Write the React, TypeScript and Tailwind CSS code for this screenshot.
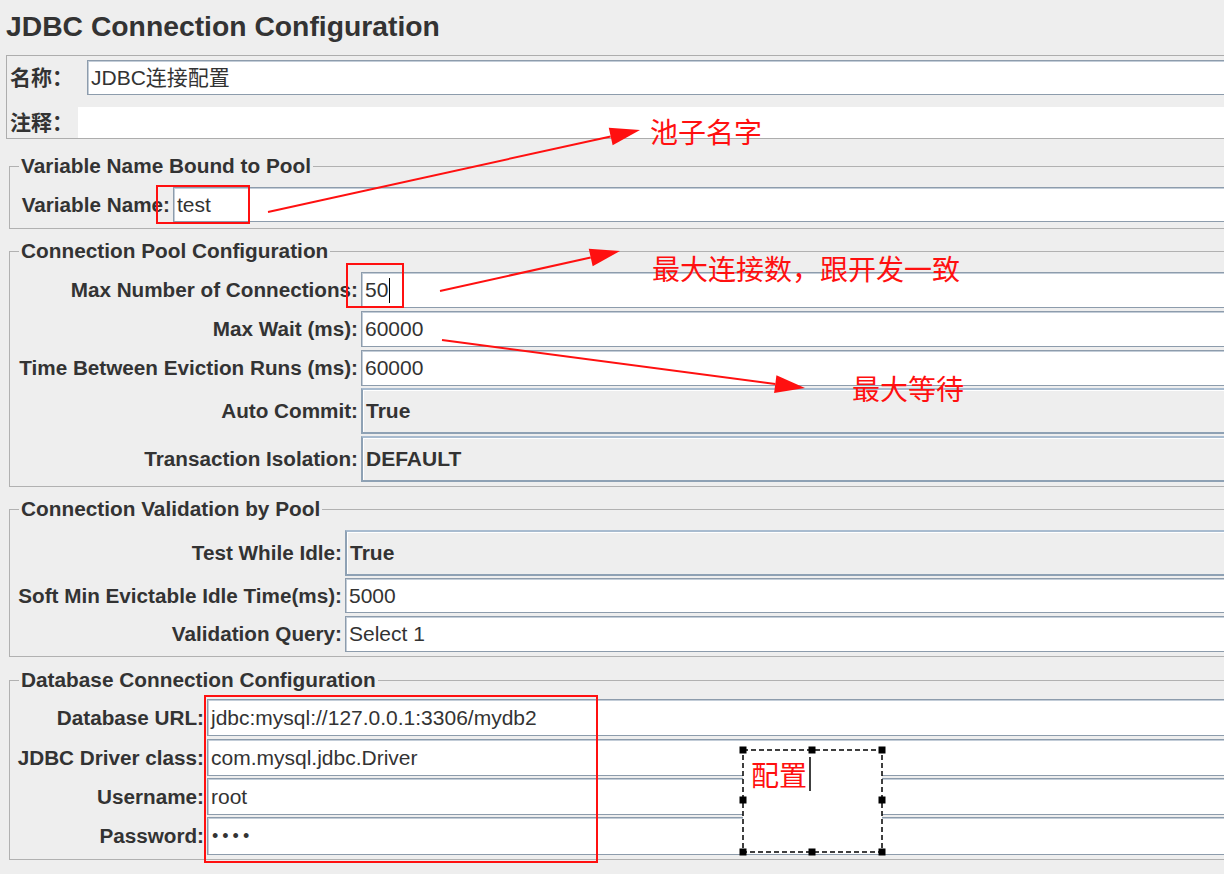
import React from 'react';

const FONT = "font-['Liberation_Sans','Noto_Sans_CJK_SC',sans-serif]";
const CJK = "font-['Noto_Sans_CJK_SC',sans-serif]";

function Field({ value, className = '' }: { value?: React.ReactNode; className?: string }) {
  return (
    <div
      className={`flex min-w-0 flex-1 items-center border border-r-0 border-[#8d9cac] bg-white pl-[3px] text-[21px] text-[#333] shadow-[inset_1px_1px_0_#c3cdd8] ${className}`}
    >
      {value}
    </div>
  );
}

function Combo({ value }: { value: string }) {
  return (
    <div className="flex min-w-0 flex-1 items-center border-2 border-r-0 border-[#8ea1b4] border-t-[#a8bbcf] bg-[#eeeeee] pl-[3px] text-[21px] font-bold text-[#333] shadow-[inset_1px_1px_0_#fff]">
      {value}
    </div>
  );
}

function Label({ text, className }: { text: string; className: string }) {
  return (
    <div className={`flex shrink-0 items-center justify-end pr-[3px] text-[20.7px] font-bold text-[#333] ${className}`}>
      {text}
    </div>
  );
}

function Panel({ title, className, children }: { title: string; className: string; children: React.ReactNode }) {
  return (
    <fieldset className={`ml-[9px] border border-r-0 border-[#b1b1b1] ${className}`}>
      <legend className="ml-[9px] px-[2px] text-[20.8px] font-bold leading-[24px] text-[#333]">{title}</legend>
      {children}
    </fieldset>
  );
}

function arrowHead(x1: number, y1: number, x2: number, y2: number, len = 30, half = 9) {
  const dx = x2 - x1;
  const dy = y2 - y1;
  const l = Math.hypot(dx, dy);
  const ux = dx / l;
  const uy = dy / l;
  const bx = x2 - ux * len;
  const by = y2 - uy * len;
  return {
    bx,
    by,
    points: `${x2},${y2} ${bx - uy * half},${by + ux * half} ${bx + uy * half},${by - ux * half}`,
  };
}

function Arrow({ x1, y1, x2, y2 }: { x1: number; y1: number; x2: number; y2: number }) {
  const h = arrowHead(x1, y1, x2, y2);
  return (
    <g>
      <line x1={x1} y1={y1} x2={h.bx} y2={h.by} stroke="#ff1010" strokeWidth={2} />
      <polygon points={h.points} fill="#ff1010" />
    </g>
  );
}

const handles = [
  [743, 750], [812, 750], [882, 750],
  [743, 800], [882, 800],
  [743, 852], [812, 852], [882, 852],
];

export default function App() {
  return (
    <div className={`relative h-[874px] w-[1224px] overflow-hidden bg-[#eeeeee] ${FONT}`}>
      <div className="pl-[6px] pt-[8px] text-[28.3px] font-bold leading-[36px] text-[#333]">
        JDBC Connection Configuration
      </div>

      {/* name / comment */}
      <div className="ml-[6px] mt-[11px] border border-r-0 border-[#adadad] pt-[4px]">
        <div className="flex h-[35px]">
          <div className="flex w-[80px] shrink-0 items-center pl-[3px] text-[21px] font-bold text-[#333]">名称：</div>
          <Field value="JDBC连接配置" />
        </div>
        <div className="mt-[12px] flex h-[31px]">
          <div className="flex w-[71px] shrink-0 items-center pl-[3px] text-[21px] font-bold text-[#333]">注释：</div>
          <div className="flex-1 bg-white" />
        </div>
      </div>

      <Panel title="Variable Name Bound to Pool" className="mt-[15px] pb-[6px] pt-[9px]">
        <div className="flex h-[35px]">
          <Label text="Variable Name:" className="w-[163px]" />
          <Field value="test" />
        </div>
      </Panel>

      <Panel title="Connection Pool Configuration" className="mt-[10px] pb-[4px] pt-[9px]">
        <div className="flex h-[36px]">
          <Label text="Max Number of Connections:" className="w-[351px]" />
          <Field
            value={
              <>
                50<span className="ml-[1px] inline-block h-[25px] w-[1px] bg-black" />
              </>
            }
          />
        </div>
        <div className="mt-[3px] flex h-[36px]">
          <Label text="Max Wait (ms):" className="w-[351px]" />
          <Field value="60000" />
        </div>
        <div className="mt-[3px] flex h-[36px]">
          <Label text="Time Between Eviction Runs (ms):" className="w-[351px]" />
          <Field value="60000" />
        </div>
        <div className="mt-[2px] flex h-[46px]">
          <Label text="Auto Commit:" className="w-[351px]" />
          <Combo value="True" />
        </div>
        <div className="mt-[2px] flex h-[46px]">
          <Label text="Transaction Isolation:" className="w-[351px]" />
          <Combo value="DEFAULT" />
        </div>
      </Panel>

      <Panel title="Connection Validation by Pool" className="mt-[10px] pb-[4px] pt-[9px]">
        <div className="flex h-[46px]">
          <Label text="Test While Idle:" className="w-[335px]" />
          <Combo value="True" />
        </div>
        <div className="mt-[2px] flex h-[35px]">
          <Label text="Soft Min Evictable Idle Time(ms):" className="w-[335px]" />
          <Field value="5000" />
        </div>
        <div className="mt-[3px] flex h-[36px]">
          <Label text="Validation Query:" className="w-[335px]" />
          <Field value="Select 1" />
        </div>
      </Panel>

      <Panel title="Database Connection Configuration" className="mt-[11px] pb-[4px] pt-[7px]">
        <div className="flex h-[37px]">
          <Label text="Database URL:" className="w-[197px]" />
          <Field value="jdbc:mysql://127.0.0.1:3306/mydb2" />
        </div>
        <div className="mt-[3px] flex h-[37px]">
          <Label text="JDBC Driver class:" className="w-[197px]" />
          <Field value="com.mysql.jdbc.Driver" />
        </div>
        <div className="mt-[2px] flex h-[37px]">
          <Label text="Username:" className="w-[197px]" />
          <Field value="root" />
        </div>
        <div className="mt-[2px] flex h-[38px]">
          <Label text="Password:" className="w-[197px]" />
          <Field value={<span className="pl-[1px] text-[18px] tracking-[4px]">••••</span>} />
        </div>
      </Panel>

      {/* annotations drawn over the form */}
      <svg className="pointer-events-none absolute left-0 top-0" width={1224} height={874}>
        <rect x={157} y={186} width={92} height={37} fill="none" stroke="#ff1010" strokeWidth={2} />
        <rect x={347} y={264} width={56} height={43} fill="none" stroke="#ff1010" strokeWidth={2} />
        <rect x={205} y={696} width={392} height={166} fill="none" stroke="#ff1010" strokeWidth={2} />
        <Arrow x1={268} y1={212} x2={640} y2={130} />
        <Arrow x1={440} y1={291} x2={620} y2={251} />
        <Arrow x1={442} y1={340} x2={805} y2={388} />
        <rect x={743} y={750} width={139} height={102} fill="#fff" stroke="#000" strokeWidth={1.5} strokeDasharray="5 3" />
        {handles.map(([x, y]) => (
          <rect key={`${x}-${y}`} x={x - 3.5} y={y - 3.5} width={7} height={7} fill="#000" />
        ))}
        <line x1={810} y1={757} x2={810} y2={791} stroke="#000" strokeWidth={1.5} />
      </svg>
      <div className={`absolute left-[650px] top-[115px] text-[28px] leading-[32px] text-[#ff1010] ${CJK}`}>池子名字</div>
      <div className={`absolute left-[652px] top-[252px] text-[28px] leading-[32px] text-[#ff1010] ${CJK}`}>最大连接数，跟开发一致</div>
      <div className={`absolute left-[852px] top-[372px] text-[28px] leading-[32px] text-[#ff1010] ${CJK}`}>最大等待</div>
      <div className={`absolute left-[751px] top-[758px] text-[28px] leading-[32px] text-[#ff1010] ${CJK}`}>配置</div>
    </div>
  );
}
